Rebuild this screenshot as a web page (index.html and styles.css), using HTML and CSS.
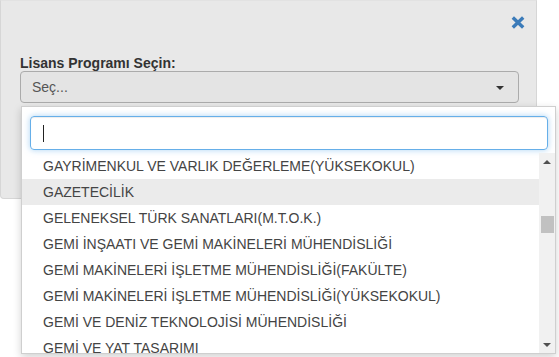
FILE: index.html
```html
<!DOCTYPE html>
<html lang="tr">
<head>
<meta charset="utf-8" />
<title>Lisans Programı Seçin</title>
<link rel="stylesheet" href="styles.css">
</head>
<body>

<!-- modal panel -->
<div class="panel">
	<div class="panel-head">
		<svg class="close" width="14" height="13" viewBox="0 0 14 13">
			<path d="M1.8 1.5 L12.2 11.5 M12.2 1.5 L1.8 11.5" stroke="#3b7bb9" stroke-width="3.4" stroke-linecap="butt" fill="none" />
		</svg>
	</div>
	<label class="field-label">Lisans Programı Seçin:</label>
	<div class="select">
		<span class="select-text">Seç...</span>
		<span class="select-arrow"></span>
	</div>
</div>

<!-- open dropdown -->
<div class="dropdown">
	<div class="search-wrap">
		<div class="search"><span class="caret"></span></div>
	</div>
	<div class="results">
		<ul class="options">
			<li>GAYRİMENKUL VE VARLIK DEĞERLEME(YÜKSEKOKUL)</li>
			<li class="hover">GAZETECİLİK</li>
			<li>GELENEKSEL TÜRK SANATLARI(M.T.O.K.)</li>
			<li>GEMİ İNŞAATI VE GEMİ MAKİNELERİ MÜHENDİSLİĞİ</li>
			<li>GEMİ MAKİNELERİ İŞLETME MÜHENDİSLİĞİ(FAKÜLTE)</li>
			<li>GEMİ MAKİNELERİ İŞLETME MÜHENDİSLİĞİ(YÜKSEKOKUL)</li>
			<li>GEMİ VE DENİZ TEKNOLOJİSİ MÜHENDİSLİĞİ</li>
			<li>GEMİ VE YAT TASARIMI</li>
			<li>GENETİK VE BİYOMÜHENDİSLİK</li>
		</ul>
		<div class="scrollbar">
			<div class="sb-btn"><span class="tri-up"></span></div>
			<div class="sb-track"><div class="sb-thumb"></div></div>
			<div class="sb-btn"><span class="tri-down"></span></div>
		</div>
	</div>
</div>

</body>
</html>
```

FILE: styles.css
```css
html, body { height: 100%; }

body {
	margin: 0;
	background: #fff;
	font-family: "Liberation Sans", Arial, sans-serif;
	font-size: 14px;
	color: #333;
	overflow: hidden;
}

.panel {
	width: 537px;
	box-sizing: border-box;
	background: #e8e8e8;
	border: 1px solid #d6d6d6;
	border-top-color: #e2e2e2;
	border-radius: 0 0 4px 4px;
	padding: 15px 0 95px 19px;
}

.panel-head {
	display: flex;
	justify-content: flex-end;
	padding-right: 11px;
	height: 12px;
}

.close { display: block; }

.field-label {
	display: block;
	margin-top: 27px;
	font-weight: bold;
	line-height: 16px;
	color: #333;
}

.select {
	width: 499px;
	height: 32px;
	box-sizing: border-box;
	display: flex;
	align-items: center;
	justify-content: space-between;
	background: #e4e4e4;
	border: 1px solid #ababab;
	border-radius: 4px;
	padding: 0 14px 0 11px;
	line-height: 30px;
}

.select-text { color: #555; }

.select-arrow {
	width: 0;
	height: 0;
	border-left: 4px solid transparent;
	border-right: 4px solid transparent;
	border-top: 4px solid #333;
	margin-top: 1px;
}

/* dropdown lies over the panel */
.dropdown {
	position: absolute;
	left: 21px;
	top: 106px;
	width: 535px;
	box-sizing: border-box;
	background: #fff;
	border: 1px solid #cfcfcf;
	box-shadow: 0 3px 8px rgba(0, 0, 0, .18);
}

.search-wrap {
	padding: 9px 7px 3px 8px;
}

.search {
	height: 34px;
	box-sizing: border-box;
	border: 1px solid #66afe9;
	border-radius: 4px;
	padding: 0 12px;
	display: flex;
	align-items: center;
	box-shadow: inset 0 1px 1px rgba(0, 0, 0, .075), 0 0 6px rgba(102, 175, 233, .55);
}

.caret {
	width: 1px;
	height: 17px;
	background: #222;
}

.results {
	display: flex;
	height: 200px;
	overflow: hidden;
}

.options {
	flex: 1;
	list-style: none;
	margin: 0;
	padding: 0;
}

.options li {
	height: 26px;
	line-height: 26px;
	padding-left: 21px;
	color: #444;
	white-space: nowrap;
}

.options li.hover { background: #ebebeb; }

.scrollbar {
	width: 16px;
	background: #f1f1f1;
	display: flex;
	flex-direction: column;
}

.sb-btn {
	height: 17px;
	display: flex;
	align-items: center;
	justify-content: center;
}

.sb-track {
	flex: 1;
	padding: 46px 1px 0 2px;
}

.sb-thumb {
	height: 17px;
	background: #c1c1c1;
}

.tri-up, .tri-down {
	width: 0;
	height: 0;
	border-left: 4px solid transparent;
	border-right: 4px solid transparent;
}

.tri-up { border-bottom: 4px solid #505050; }
.tri-down { border-top: 4px solid #505050; }
```
